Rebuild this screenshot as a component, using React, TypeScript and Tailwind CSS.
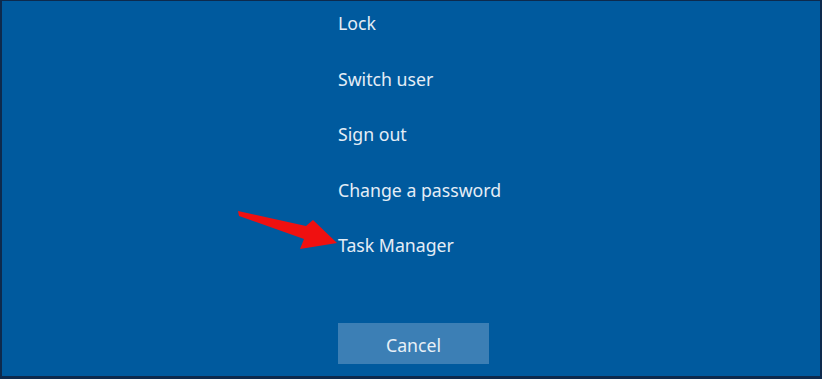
import React from "react";

const items = ["Lock", "Switch user", "Sign out", "Change a password", "Task Manager"];

export default function App() {
  return (
    <div
      className="w-[822px] h-[379px] border-t-[1px] border-x-[2px] border-b-[3px] border-[#0d2a4d] bg-[#005a9e] relative"
      style={{ fontFamily: '"Noto Sans", "Open Sans", sans-serif' }}
    >
      <div className="flex flex-col pl-[336px] pt-[10px]">
        <div className="flex flex-col gap-[31.5px]">
          {items.map((t) => (
            <div key={t} className="h-[24px] leading-[24px] text-[17.7px] text-[#e4edf6]">
              {t}
            </div>
          ))}
        </div>
        <button className="mt-[66px] w-[151px] h-[41px] bg-[#3c7fb5] text-[17.7px] text-[#e8f0f7] leading-[41px] text-center pt-[2px]">
          Cancel
        </button>
      </div>
      <svg className="absolute left-0 top-0" width="822" height="379" viewBox="0 0 822 379">
        <polygon
          points="238,211 306,226 313,220 337,243 300,249 304,239 239,216"
          transform="translate(-2,-1)"
          fill="#f01010"
        />
      </svg>
    </div>
  );
}
